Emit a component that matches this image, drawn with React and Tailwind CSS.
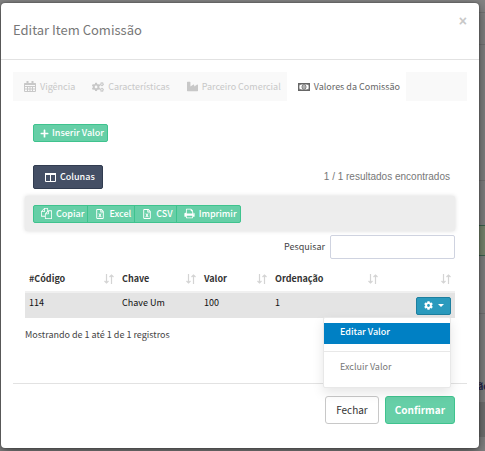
import React from "react";
import { FaPlus, FaCogs, FaCog, FaIndustry, FaRegFileExcel } from "react-icons/fa";

function CalendarIcon() {
  return (
    <svg viewBox="0 0 12 11" className="h-[11px] w-3 shrink-0" fill="none" stroke="currentColor" aria-hidden="true">
      <path d="M.5 2.500h11v8H.5zM.5 5.500h11M.5 8h11M3.500 5v5.500M6 5v5.500M8.500 5v5.500" />
      <path d="M.5 3h11" strokeWidth="2" />
      <path d="M3.500 0v3M8.500 0v3" strokeWidth="2" />
    </svg>
  );
}

function MoneyIcon() {
  return (
    <svg viewBox="0 0 12 8" className="h-2 w-3 shrink-0" fill="none" stroke="currentColor" aria-hidden="true">
      <path d="M.6 .75h10.800v6.500H.6z" strokeWidth="1.5" />
      <ellipse cx="6" cy="4" rx="2" ry="2.200" strokeWidth="1" />
      <path d="M6 3v2.200" strokeWidth="1" />
      <path d="M1 2.500 2.500 1M11 2.500 9.500 1M1 5.500 2.500 7M11 5.500 9.500 7" strokeWidth="1" />
    </svg>
  );
}

function ColumnsIcon() {
  return (
    <svg viewBox="0 0 11 9" className="h-[9px] w-[11px] shrink-0" fill="none" stroke="currentColor" aria-hidden="true">
      <path d="M.5 1v7.500h10V1M5.500 1v7" />
      <path d="M0 1h11" strokeWidth="2" />
    </svg>
  );
}

function CopyIcon() {
  return (
    <svg viewBox="0 0 1792 1792" className="h-[11px] w-[11px] shrink-0" fill="currentColor" aria-hidden="true">
      <path d="M1696 384q40 0 68 28t28 68v1216q0 40-28 68t-68 28h-960q-40 0-68-28t-28-68v-288h-544q-40 0-68-28t-28-68v-672q0-40 20-88t48-76l408-408q28-28 76-48t88-20h416q40 0 68 28t28 68v328q68-40 128-40h416zm-544 213l-299 299h299v-299zm-640-384l-299 299h299v-299zm196 647l316-316v-416h-384v416q0 40-28 68t-68 28h-416v640h512v-256q0-40 20-88t48-76zm956 804v-1152h-384v416q0 40-28 68t-68 28h-416v640h896z" />
    </svg>
  );
}

function PrintIcon() {
  return (
    <svg viewBox="0 0 1792 1792" className="h-[11px] w-[11px] shrink-0" fill="currentColor" aria-hidden="true">
      <path d="M448 1536h896v-256h-896v256zm0-640h896v-384h-160q-40 0-68-28t-28-68v-160h-640v640zm1152 64q0-26-19-45t-45-19-45 19-19 45 19 45 45 19 45-19 19-45zm128 0v416q0 13-9.5 22.5t-22.5 9.5h-224v160q0 40-28 68t-68 28h-960q-40 0-68-28t-28-68v-160h-224q-13 0-22.5-9.5t-9.5-22.5v-416q0-79 56.5-135.5t135.5-56.5h64v-544q0-40 28-68t68-28h672q40 0 88 20t76 48l152 152q28 28 48 76t20 88v256h64q79 0 135.5 56.5t56.5 135.5z" />
    </svg>
  );
}

function SortIcon() {
  return (
    <svg viewBox="0 0 10 10" className="h-[10px] w-[10px] shrink-0 text-[#d4d4d4]" fill="none" stroke="currentColor" aria-hidden="true">
      <path d="M2.500 0v9M.5 7l2 2 2-2M7.500 10V1M5.500 3l2-2 2 2" strokeWidth="1.200" />
    </svg>
  );
}

const tabs = [
  { label: "Vigência", icon: <CalendarIcon /> },
  { label: "Características", icon: <FaCogs size={12} /> },
  { label: "Parceiro Comercial", icon: <FaIndustry size={11} /> },
  { label: "Valores da Comissão", icon: <MoneyIcon />, active: true },
];

const exportsList = [
  { label: "Copiar", icon: <CopyIcon /> },
  { label: "Excel", icon: <FaRegFileExcel size={10} /> },
  { label: "CSV", icon: <FaRegFileExcel size={10} /> },
  { label: "Imprimir", icon: <PrintIcon /> },
];

const columns = ["#Código", "Chave", "Valor", "Ordenação", ""];

export default function App() {
  return (
    <div className="relative bg-[#858585] font-['Noto_Sans_CJK_SC',sans-serif] text-[9px] leading-4 text-[#444]">
      <div className="absolute inset-y-0 right-0 flex w-10 flex-col overflow-hidden" aria-hidden="true">
        <div className="h-[13px] border-b border-[#767676]" />
        <div className="h-8 border-b border-[#767676]" />
        <div className="h-[136px] border-b border-[#767676]" />
        <div className="h-11" />
        <div className="h-[31px] border-y border-[#3c6650] bg-[#7c8a72]" />
        <div className="h-[58px] border-b border-[#767676]" />
        <div className="h-[65px]" />
        <div className="h-[23px] pl-[33px] font-bold text-[#22224a]">ão</div>
        <div className="h-[35px] bg-[#747474]" />
      </div>

      <div className="relative overflow-hidden pt-[3px] pr-[6px] pb-[3px] pl-px">
        <section role="dialog" aria-labelledby="title" className="rounded bg-white shadow-[0_4px_14px_rgba(0,0,0,0.5),0_0_2px_rgba(0,0,0,0.5)]">
          <header className="flex h-[57px] items-start justify-between border-b border-[#e2e2e2] px-3">
            <h1 id="title" className="pt-[15px] text-[13px] leading-6 text-[#777]">Editar Item Comissão</h1>
            <button aria-label="Fechar janela" className="pt-2 font-['Liberation_Sans',sans-serif] text-[14px] leading-5 font-bold text-[#c8c8c8]">×</button>
          </header>

          <div className="px-3 pt-3">
            <nav className="flex h-[29px] bg-[#f9f9f9]">
              {tabs.map((t) => (
                <a
                  key={t.label}
                  href="#"
                  className={
                    t.active
                      ? "flex items-center gap-1 bg-white pr-[6px] pl-[11px] text-[#666]"
                      : "flex items-center gap-1 pr-[6px] pl-[11px] text-[#c8c8c8]"
                  }
                >
                  {t.icon}
                  {t.label}
                </a>
              ))}
            </nav>

            <div className="px-3 pt-[23px]">
              <button className="ml-2 flex h-[18px] items-center gap-[3px] rounded-xs border border-[#3fc38e] bg-[#66cfa7] pr-[3px] pl-[6px] font-medium text-white">
                <FaPlus size={9} />
                Inserir Valor
              </button>

              <div className="mt-[23px] ml-2 flex items-center justify-between pr-[5px]">
                <button className="flex h-6 items-center gap-1 rounded-xs border border-[#313c50] bg-[#444f65] pr-[7px] pl-[11px] font-medium text-white">
                  <ColumnsIcon />
                  Colunas
                </button>
                <span className="font-['Liberation_Sans',sans-serif] text-[10px] text-[#777]">1 / 1 resultados encontrados</span>
              </div>

              <div className="mt-[7px] flex h-[35px] items-center rounded-xs bg-[#ededed] px-2 shadow-[0_0_4px_rgba(0,0,0,0.15)]">
                {exportsList.map((b) => (
                  <button
                    key={b.label}
                    className="-mr-px flex h-[18px] items-center gap-1 border border-[#3fc38e] bg-[#66cfa7] pr-[3px] pl-[7px] font-medium text-white first:rounded-l-xs last:rounded-r-xs"
                  >
                    {b.icon}
                    {b.label}
                  </button>
                ))}
              </div>

              <div className="mt-1 flex items-center justify-end gap-[5px]">
                <label htmlFor="q">Pesquisar</label>
                <input id="q" className="h-6 w-[125px] rounded-xs border border-[#cfd3e0] bg-white px-2 outline-none" />
              </div>

              <table className="mt-1 w-full table-fixed text-left">
                <colgroup>
                  <col className="w-[93px]" />
                  <col className="w-[82px]" />
                  <col className="w-[71px]" />
                  <col className="w-[111px]" />
                  <col />
                </colgroup>
                <thead>
                  <tr className="h-[29px] border-b-2 border-[#f0f0f0] text-[#333]">
                    {columns.map((c, i) => (
                      <th key={i} className="px-1 pt-[3px] pb-0 font-bold">
                        <span className="flex items-center justify-between">
                          <span>{c}</span>
                          <SortIcon />
                        </span>
                      </th>
                    ))}
                  </tr>
                </thead>
                <tbody>
                  <tr className="h-[26px] bg-[#e4e4e4] text-[#111]">
                    <td className="px-1 pb-[6px]">114</td>
                    <td className="px-1 pb-[6px]">Chave Um</td>
                    <td className="px-1 pb-[6px]">100</td>
                    <td className="px-1 pb-[6px]">1</td>
                    <td className="px-1">
                      <div className="relative flex justify-end">
                        <button aria-label="Ações" aria-expanded="true" className="flex h-[18px] w-[35px] items-center justify-center gap-[5px] rounded-xs border border-[#1d7f9f] bg-[#2a9abd] text-white">
                          <FaCog size={9} />
                          <span className="border-x-[3px] border-t-[3px] border-x-transparent border-t-white" />
                        </button>
                        <div role="menu" className="absolute top-full right-0 z-10 mt-[2px] w-[128px] rounded-xs border border-[#e8e8e8] bg-white pt-[5px] pb-2 shadow-[0_5px_12px_rgba(0,0,0,0.1)]">
                          <a role="menuitem" href="#" className="block h-[21px] bg-[#0080c4] px-4 py-px font-medium text-white">Editar Valor</a>
                          <div className="my-[7px] border-t border-[#e8e8e8]" />
                          <a role="menuitem" href="#" className="block h-5 px-4 text-[#777]">Excluir Valor</a>
                        </div>
                      </div>
                    </td>
                  </tr>
                </tbody>
              </table>
              <p className="mt-[9px]">Mostrando de 1 até 1 de 1 registros</p>
            </div>

            <footer className="mt-10 flex justify-end gap-[6px] border-t border-[#e2e2e2] pt-3 pr-3 pb-6 text-[10px]">
              <button className="h-7 rounded-[3px] border border-[#c8c8c8] bg-white px-[10px] text-[#333]">Fechar</button>
              <button className="h-7 rounded-[3px] border border-[#3fc38e] bg-[#66cfa7] px-[9px] font-bold text-white">Confirmar</button>
            </footer>
          </div>
        </section>
      </div>
    </div>
  );
}
